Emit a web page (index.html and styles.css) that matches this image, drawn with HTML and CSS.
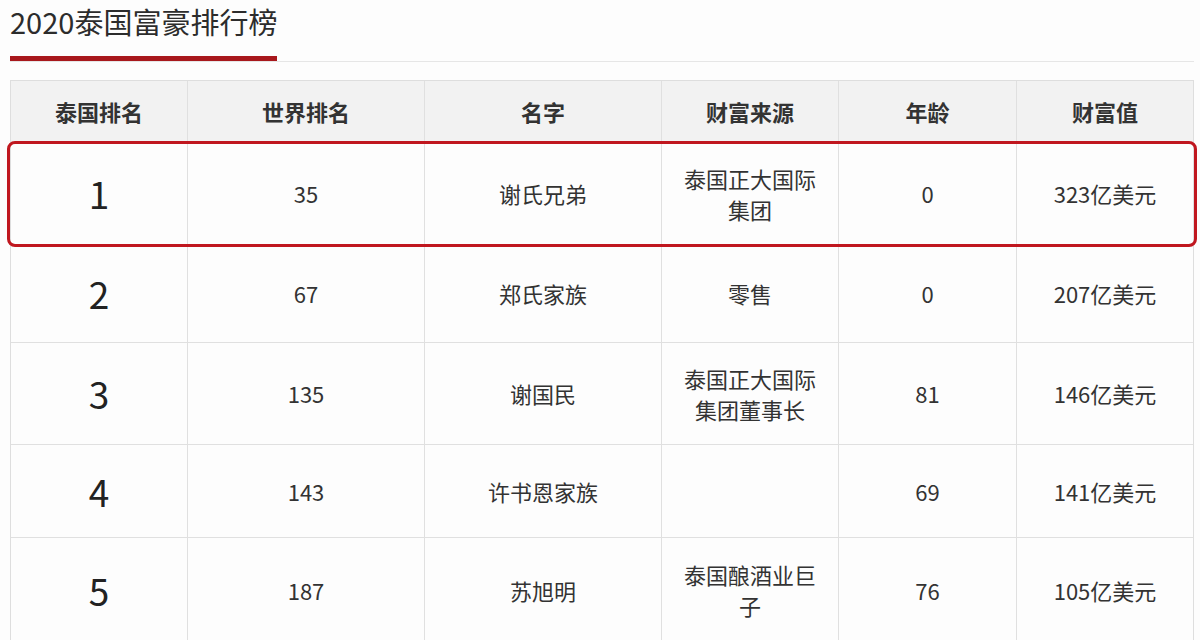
FILE: index.html
```html
<!DOCTYPE html>
<html lang="zh-CN">
<head>
<meta charset="utf-8">
<title>2020泰国富豪排行榜</title>
<link rel="stylesheet" href="styles.css">
</head>
<body>
<div class="page">
  <div class="head">
    <h2 class="title">2020泰国富豪排行榜</h2>
  </div>
  <div class="table">
    <div class="row hdr">
      <div class="c">泰国排名</div>
      <div class="c">世界排名</div>
      <div class="c">名字</div>
      <div class="c">财富来源</div>
      <div class="c">年龄</div>
      <div class="c">财富值</div>
    </div>
    <div class="row r1 hl">
      <div class="c rank">1</div>
      <div class="c">35</div>
      <div class="c">谢氏兄弟</div>
      <div class="c">泰国正大国际<br>集团</div>
      <div class="c">0</div>
      <div class="c">323亿美元</div>
    </div>
    <div class="row r2">
      <div class="c rank">2</div>
      <div class="c">67</div>
      <div class="c">郑氏家族</div>
      <div class="c">零售</div>
      <div class="c">0</div>
      <div class="c">207亿美元</div>
    </div>
    <div class="row r3">
      <div class="c rank">3</div>
      <div class="c">135</div>
      <div class="c">谢国民</div>
      <div class="c">泰国正大国际<br>集团董事长</div>
      <div class="c">81</div>
      <div class="c">146亿美元</div>
    </div>
    <div class="row r4">
      <div class="c rank">4</div>
      <div class="c">143</div>
      <div class="c">许书恩家族</div>
      <div class="c"></div>
      <div class="c">69</div>
      <div class="c">141亿美元</div>
    </div>
    <div class="row r5">
      <div class="c rank">5</div>
      <div class="c">187</div>
      <div class="c">苏旭明</div>
      <div class="c">泰国酿酒业巨<br>子</div>
      <div class="c">76</div>
      <div class="c">105亿美元</div>
    </div>
  </div>
</div>
</body>
</html>
```

FILE: styles.css
```css
html, body {
  margin: 0;
  padding: 0;
  background: #fdfdfd;
}
body {
  font-family: "Noto Sans CJK SC", "Noto Sans", sans-serif;
  color: #333;
  overflow: hidden;
  height: 640px;
}
.page {
  padding-left: 10px;
  width: 1184px;
}
.head {
  border-bottom: 1px solid #e6e6e6;
  height: 61px;
}
.title {
  display: inline-block;
  margin: 0;
  font-size: 29px;
  font-weight: normal;
  line-height: 42px;
  padding-bottom: 14px;
  border-bottom: 5px solid #a8181c;
  color: #2c2c2c;
  width: 267px;
  white-space: nowrap;
}
.table {
  margin-top: 18px;
  border: 1px solid #dedede;
  border-bottom: none;
}
.row {
  display: grid;
  grid-template-columns: 177px 237px 237px 177px 178px 1fr;
  border-bottom: 1px solid #e0e0e0;
}
.c {
  display: flex;
  align-items: center;
  justify-content: center;
  text-align: center;
  font-size: 22px;
  line-height: 31px;
  border-right: 1px solid #e0e0e0;
  color: #333;
}
.c:last-child {
  border-right: none;
}
.hdr {
  background: #f2f2f2;
  height: 61px;
}
.hdr .c {
  font-weight: bold;
  font-size: 22px;
  color: #333;
}
.rank {
  font-size: 37px;
  color: #222;
}
.r1 { height: 101px; }
.r2 { height: 97px; }
.r3 { height: 101px; }
.r4 { height: 92px; }
.r5 { height: 104px; }
.hl {
  outline: 3px solid #c0171f;
  outline-offset: -1px;
  border-radius: 6px;
  position: relative;
  margin: 0 -2px;
  padding: 0 2px;
}
```
